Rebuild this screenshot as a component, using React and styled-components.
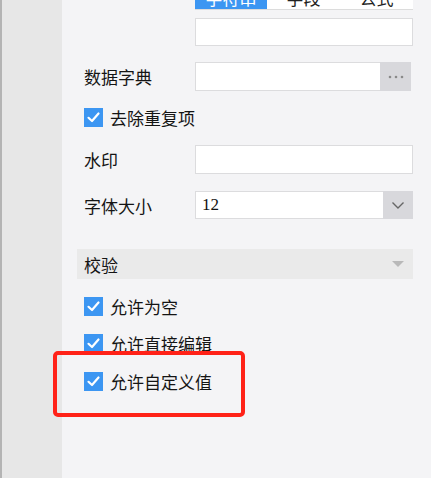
import React from "react";
import styled, { createGlobalStyle } from "styled-components";

const Global = createGlobalStyle`
  html, body { margin: 0; padding: 0; height: 100%; overflow: hidden; }
  body { font-family: "Noto Sans CJK SC", "Noto Sans", sans-serif; }
  #root { height: 100%; }
`;

const Frame = styled.div`
  display: flex;
  height: 478px;
  width: 431px;
  position: relative;
  overflow: hidden;
`;

const Rail = styled.div`
  width: 60px;
  flex: none;
  background: #e7e7e7;
  border-left: 2px solid #b4b4b4;
`;

const Panel = styled.div`
  flex: 1;
  background: #f4f4f6;
  display: flex;
  flex-direction: column;
  padding: 0 18px 0 15px;
  color: #141414;
  font-size: 17px;
`;

const Segmented = styled.div`
  display: grid;
  grid-template-columns: 72px 1fr 1fr;
  margin: -18px 0 0 118px;
  height: 27px;
  border-bottom: 1px solid #dcdcdc;
  background: #fff;
`;

const Seg = styled.div`
  display: flex;
  align-items: center;
  justify-content: center;
  padding-top: 4px;
  box-sizing: border-box;
  background: ${(p) => (p.$active ? "#3c96f2" : "#fff")};
  color: ${(p) => (p.$active ? "#fff" : "#222")};
  font-size: 17px;
  line-height: 1;
`;

const FieldBox = styled.div`
  margin: ${(p) => p.$mt}px 0 0 118px;
  height: ${(p) => p.$h}px;
  box-sizing: border-box;
  background: #fff;
  border: 1px solid #dcdcde;
`;

const Row = styled.div`
  display: grid;
  grid-template-columns: 111px 1fr;
  align-items: center;
  margin: ${(p) => p.$mt}px 0 0 7px;
  height: ${(p) => p.$h}px;
`;

const Label = styled.span`
  line-height: 1;
  white-space: nowrap;
`;

const Control = styled.div`
  display: flex;
  height: 100%;
  box-sizing: border-box;
  background: #fff;
  border: 1px solid #dcdcde;
  margin-right: ${(p) => p.$mr || 0}px;
`;

const ValueText = styled.span`
  flex: 1;
  display: flex;
  align-items: center;
  padding-left: 6px;
  font-family: "Liberation Serif", serif;
  font-size: 17px;
  color: #111;
`;

const SideButton = styled.div`
  width: ${(p) => p.$w}px;
  flex: none;
  background: #d8d8dc;
  display: flex;
  align-items: center;
  justify-content: center;
  margin: -1px -1px -1px 0;
`;

const CheckRow = styled.label`
  display: flex;
  align-items: center;
  gap: 7px;
  margin: ${(p) => p.$mt}px 0 0 7px;
  height: 20px;
  line-height: 1;
`;

const Box = styled.span`
  width: 19px;
  height: 19px;
  flex: none;
  background: #3c96f2;
  display: flex;
  align-items: center;
  justify-content: center;
`;

const Header = styled.div`
  margin-top: 30px;
  height: 30px;
  background: #eaeaea;
  display: flex;
  align-items: center;
  justify-content: space-between;
  padding: 0 9px 0 7px;
`;

const Annotation = styled.div`
  position: absolute;
  left: 53px;
  top: 351px;
  width: 192px;
  height: 66px;
  box-sizing: border-box;
  border: 4px solid #ff2218;
  border-radius: 5px;
  pointer-events: none;
`;

const Check = () => (
  <Box>
    <svg width="15" height="15" viewBox="0 0 15 15">
      <path d="M2.5 7.8 L6 11 L12.5 3.5" fill="none" stroke="#fff" strokeWidth="2.2" strokeLinecap="round" strokeLinejoin="round" />
    </svg>
  </Box>
);

const CheckItem = ({ mt, children }) => (
  <CheckRow $mt={mt}>
    <Check />
    <span>{children}</span>
  </CheckRow>
);

export default function App() {
  return (
    <>
      <Global />
      <Frame>
        <Rail />
        <Panel>
          <Segmented>
            <Seg $active>字符串</Seg>
            <Seg>字段</Seg>
            <Seg>公式</Seg>
          </Segmented>
          <FieldBox $mt={8} $h={28} />
          <Row $mt={16} $h={29}>
            <Label>数据字典</Label>
            <Control $mr={2}>
              <ValueText />
              <SideButton $w={31}>
                <svg width="16" height="4" viewBox="0 0 16 4">
                  <circle cx="2" cy="2" r="1.3" fill="#8a8a8a" />
                  <circle cx="8" cy="2" r="1.3" fill="#8a8a8a" />
                  <circle cx="14" cy="2" r="1.3" fill="#8a8a8a" />
                </svg>
              </SideButton>
            </Control>
          </Row>
          <CheckItem mt={16}>去除重复项</CheckItem>
          <Row $mt={18} $h={29}>
            <Label>水印</Label>
            <Control />
          </Row>
          <Row $mt={17} $h={28}>
            <Label>字体大小</Label>
            <Control>
              <ValueText>12</ValueText>
              <SideButton $w={30}>
                <svg width="14" height="9" viewBox="0 0 14 9">
                  <path d="M1.5 1.5 L7 7 L12.5 1.5" fill="none" stroke="#666" strokeWidth="1.4" />
                </svg>
              </SideButton>
            </Control>
          </Row>
          <Header>
            <Label>校验</Label>
            <svg width="12" height="7" viewBox="0 0 12 7">
              <path d="M0 0 H12 L6 6 Z" fill="#b9b9b9" />
            </svg>
          </Header>
          <CheckItem mt={17}>允许为空</CheckItem>
          <CheckItem mt={17}>允许直接编辑</CheckItem>
          <CheckItem mt={18}>允许自定义值</CheckItem>
        </Panel>
        <Annotation />
      </Frame>
    </>
  );
}
